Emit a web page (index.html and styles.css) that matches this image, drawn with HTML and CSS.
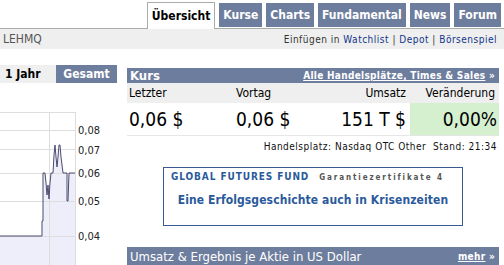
FILE: index.html
```html
<!DOCTYPE html>
<html lang="de">
<head>
  <meta charset="UTF-8">
  <meta name="viewport" content="width=device-width, initial-scale=1.0">
  <title>LEHMQ Übersicht</title>
  <link rel="stylesheet" href="styles.css">
</head>
<body>
  <div class="tabs">
    <a class="tab active" href="#">Übersicht</a>
    <a class="tab" href="#">Kurse</a>
    <a class="tab" href="#">Charts</a>
    <a class="tab" href="#">Fundamental</a>
    <a class="tab" href="#">News</a>
    <a class="tab" href="#">Forum</a>
  </div>
  <div class="subbar">
    <span class="symbol">LEHMQ</span>
    <span class="tools">Einfügen in <a href="#">Watchlist</a> | <a href="#">Depot</a> | <a href="#">Börsenspiel</a></span>
  </div>

  <div class="main">
    <div class="side">
      <div class="range">
        <span class="range-item">1 Jahr</span>
        <span class="range-item active">Gesamt</span>
      </div>
      <svg class="chart" width="117" height="154" viewBox="0 0 117 154">
        <polygon class="area" points="0,125 42,125 42,110 43,110 43,62 45,62 46,72 47,84 48,74 49,88 50,72 51,62 53,62 54,44 55,34 56,46 57,56 58,46 59,34 60,34 61,46 63,62 67,62 67,90 68,90 69,62 75,62 75,154 0,154"/>
        <g class="grid">
          <line x1="0" y1="1.5" x2="75" y2="1.5"/>
          <line x1="0" y1="19.5" x2="75" y2="19.5"/>
          <line x1="0" y1="38.5" x2="75" y2="38.5"/>
          <line x1="0" y1="62.5" x2="75" y2="62.5"/>
          <line x1="0" y1="90.5" x2="75" y2="90.5"/>
          <line x1="0" y1="125.5" x2="75" y2="125.5"/>
          <line x1="49.5" y1="1" x2="49.5" y2="154"/>
          <line x1="75.5" y1="1" x2="75.5" y2="154"/>
        </g>
        <polyline class="line" points="0,125 42,125 42,110 43,110 43,62 45,62 46,72 47,84 48,74 49,88 50,72 51,62 53,62 54,44 55,34 56,46 57,56 58,46 59,34 60,34 61,46 63,62 67,62 67,90 68,90 69,62 75,62"/>
        <g class="labels">
          <text x="78" y="23">0,08</text>
          <text x="78" y="43">0,07</text>
          <text x="78" y="66">0,06</text>
          <text x="78" y="94">0,05</text>
          <text x="78" y="129">0,04</text>
        </g>
      </svg>
    </div>

    <div class="content">
      <div class="bar">
        <span class="bar-title">Kurs</span>
        <span class="bar-more"><a href="#">Alle Handelsplätze, Times &amp; Sales</a> »</span>
      </div>
      <div class="quote">
        <div class="quote-head">
          <span class="cell">Letzter</span>
          <span class="cell">Vortag</span>
          <span class="cell right">Umsatz</span>
          <span class="cell right">Veränderung</span>
        </div>
        <div class="quote-vals">
          <span class="cell">0,06 $</span>
          <span class="cell">0,06 $</span>
          <span class="cell right">151 T $</span>
          <span class="cell right change">0,00%</span>
        </div>
      </div>
      <div class="venue">Handelsplatz: Nasdaq OTC Other&nbsp; Stand: 21:34</div>

      <div class="ad">
        <div class="ad-top">
          <span class="ad-brand">GLOBAL FUTURES FUND</span>
          <span class="ad-sub">Garantiezertifikate 4</span>
        </div>
        <div class="ad-title">Eine Erfolgsgeschichte auch in Krisenzeiten</div>
      </div>

      <div class="bar bar-plain">
        <span class="bar-title">Umsatz &amp; Ergebnis je Aktie in US Dollar</span>
        <span class="bar-more"><a href="#">mehr</a> »</span>
      </div>
    </div>
  </div>
</body>
</html>
```

FILE: styles.css
```css
body {
  margin: 0;
  padding: 0;
  background-color: white;
  font-family: "DejaVu Sans Condensed", "DejaVu Sans", sans-serif;
  font-size: 12px;
  color: #000;
  overflow: hidden;
}

a {
  color: inherit;
}

/* Reiter oben */
.tabs {
  display: flex;
  justify-content: flex-end;
  gap: 4px;
  padding: 3px 3px 0 0;
  height: 25px;
  border-bottom: 1px solid #a6aea6;
}

.tab {
  display: flex;
  align-items: center;
  padding: 0 4px;
  height: 24px;
  background-color: #6d7d9d;
  color: white;
  font-weight: bold;
  font-size: 12px;
  text-decoration: none;
}

.tab.active {
  height: 26px;
  margin-top: -1px;
  margin-bottom: -1px;
  padding: 0 4px;
  background-color: white;
  color: #000;
  border: 1px solid #a6aea6;
  border-bottom: none;
}

.subbar {
  display: flex;
  justify-content: space-between;
  align-items: center;
  height: 20px;
  padding: 0 7px 0 3px;
  background-color: #efefef;
}

.symbol {
  color: #555;
  font-size: 12px;
}

.tools {
  color: #333;
  font-size: 10px;
  letter-spacing: 0.5px;
}

.tools a {
  color: #12348a;
  text-decoration: none;
}

.main {
  display: flex;
  gap: 10px;
  margin-top: 16px;
}

/* linke Spalte mit Chart */
.side {
  width: 117px;
  flex-shrink: 0;
}

.range {
  display: flex;
  height: 18px;
}

.range-item {
  display: flex;
  align-items: center;
  width: 51px;
  padding-left: 5px;
  background-color: #efefef;
  font-weight: bold;
  font-size: 12px;
}

.range-item.active {
  width: 61px;
  padding-left: 0;
  justify-content: center;
  background-color: #6d7d9d;
  color: white;
}

.chart {
  display: block;
  margin-top: 28px;
}

.chart .area {
  fill: #eeeefb;
}

.chart .grid line {
  stroke: #dddddd;
  stroke-width: 1;
}

.chart .line {
  fill: none;
  stroke: #4b4b70;
  stroke-width: 1;
}

.chart .labels text {
  font-family: "DejaVu Sans Condensed", "DejaVu Sans", sans-serif;
  font-size: 11px;
  fill: #222;
}

/* rechte Spalte */
.content {
  width: 372px;
  padding-top: 3px;
}

.bar {
  display: flex;
  justify-content: space-between;
  align-items: center;
  height: 15px;
  padding: 0 4px 0 3px;
  background-color: #6d7d9d;
  color: white;
}

.bar-title {
  font-weight: bold;
  font-size: 13px;
}

.bar-more {
  font-weight: bold;
  font-size: 10px;
  letter-spacing: 0.3px;
}

.bar-plain {
  height: 19px;
  margin-top: 21px;
}

.bar-plain .bar-title {
  font-weight: normal;
  font-size: 13px;
}

.quote-head,
.quote-vals {
  display: grid;
  grid-template-columns: 109px 100px 74px 89px;
}

.quote-head {
  height: 20px;
  align-items: center;
  background-color: #efefef;
  font-size: 12px;
}

.quote-vals {
  height: 32px;
  align-items: stretch;
  font-size: 19px;
  border-bottom: 1px solid #e6e6e6;
}

.cell {
  display: flex;
  align-items: center;
  padding-left: 2px;
}

.quote-head .cell:nth-child(2),
.quote-vals .cell:nth-child(2) {
  padding-left: 0;
}

.cell.right {
  justify-content: flex-end;
  padding-left: 0;
  padding-right: 4px;
}

.cell.change {
  background-color: #d5f0cf;
  padding-right: 2px;
}

.venue {
  text-align: right;
  padding: 5px 2px 0 0;
  height: 16px;
  font-size: 10px;
  letter-spacing: 0.5px;
  color: #111;
}

/* Werbung */
.ad {
  width: 298px;
  height: 57px;
  margin: 10px auto 0 auto;
  border: 1px solid #3a5b92;
  color: #2b5a9b;
  white-space: nowrap;
}

.ad-top {
  display: flex;
  align-items: baseline;
  gap: 10px;
  padding: 3px 0 0 7px;
}

.ad-brand {
  font-weight: bold;
  font-size: 10px;
  letter-spacing: 0.9px;
}

.ad-sub {
  font-size: 8px;
  letter-spacing: 1.9px;
  color: #555;
  font-weight: bold;
}

.ad-title {
  text-align: center;
  margin-top: 11px;
  font-weight: bold;
  font-size: 12px;
  letter-spacing: 0.1px;
}
```
